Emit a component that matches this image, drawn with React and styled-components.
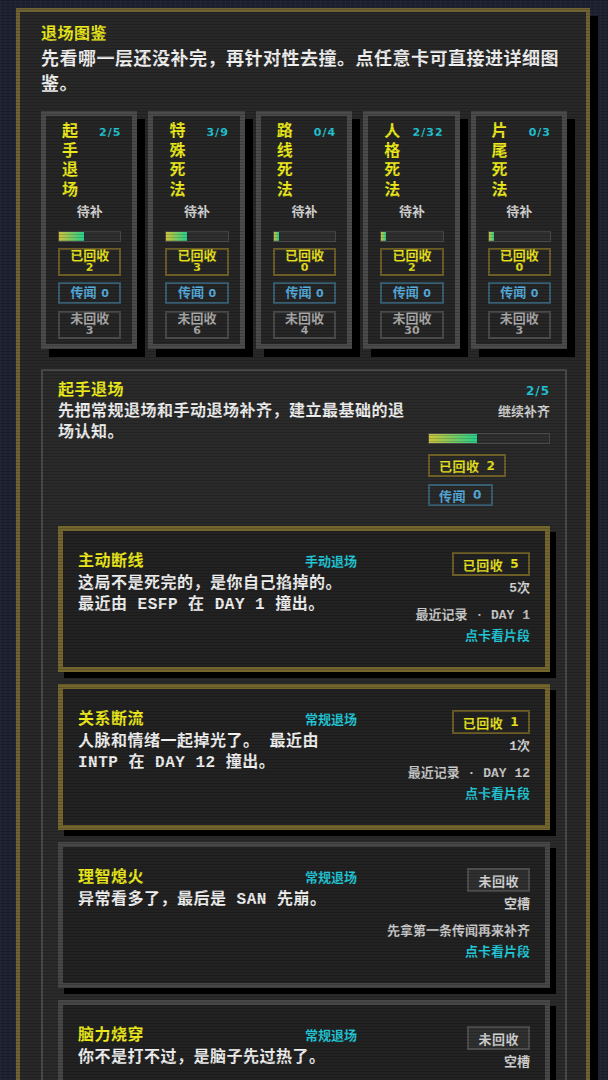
import React from "react";
import styled, { createGlobalStyle } from "styled-components";

const MONO = `"Liberation Mono", "Noto Sans CJK SC", monospace`;
const SANS = `"DejaVu Sans", "Noto Sans CJK SC", sans-serif`;

const YELLOW = "#ecea1c";
const CYAN = "#22c6d6";

const GlobalStyle = createGlobalStyle`
  html, body {
    margin: 0;
    padding: 0;
  }
  body {
    background-color: #1f2331;
    background-image: repeating-linear-gradient(
      90deg,
      rgba(255, 255, 255, 0.025) 0 1px,
      transparent 1px 5px
    );
    font-family: ${MONO};
    font-weight: 700;
    color: #eeeeee;
  }
`;

// crt scanlines over the whole screen
const Scanlines = styled.div`
  position: fixed;
  inset: 0;
  pointer-events: none;
  z-index: 10;
  background: repeating-linear-gradient(
    to bottom,
    rgba(0, 0, 0, 0.16) 0 1px,
    transparent 1px 3px
  );
`;

const Page = styled.div`
  padding: 8px 18px 40px 16px;
`;

const Panel = styled.section`
  background: #282828;
  border: 4px solid #6f6233;
  box-shadow: 8px 8px 0 #000;
  padding: 12px 19px 30px 21px;
`;

const PanelTitle = styled.h2`
  margin: 0;
  font-size: 16px;
  line-height: 22px;
  letter-spacing: 0.5px;
  color: ${YELLOW};
`;

const PanelLead = styled.p`
  margin: 2px 0 0;
  font-size: 18px;
  line-height: 25px;
  letter-spacing: 0.5px;
  color: #f0f0f0;
`;

const TallyRow = styled.div`
  margin-top: 13px;
  display: grid;
  grid-template-columns: repeat(5, minmax(0, 1fr));
  column-gap: 11px;
`;

const Tally = styled.div`
  background: #262626;
  border: 5px solid #4b4b4b;
  box-shadow: 8px 8px 0 #000;
  padding: 7px 11px 5px 12px;
  display: flex;
  flex-direction: column;
`;

const TallyHead = styled.div`
  display: flex;
  justify-content: space-between;
  align-items: flex-start;
`;

const TallyName = styled.div`
  width: 1em;
  margin-left: 4px;
  font-size: 16px;
  line-height: 19.5px;
  color: ${YELLOW};
  word-break: break-all;
`;

const Count = styled.span`
  font-family: ${SANS};
  font-size: ${(p) => p.$size || 11}px;
  line-height: ${(p) => p.$line || 19.5}px;
  letter-spacing: 1px;
  color: ${CYAN};
`;

const TallyState = styled.div`
  margin-top: 4px;
  text-align: center;
  font-size: 13px;
  line-height: 16px;
  color: #d4d4d4;
`;

const Bar = styled.div`
  margin-top: ${(p) => p.$gap || 10}px;
  height: 11px;
  box-sizing: border-box;
  border: 1px solid #4a4a4a;
  background: #2f2f2f;
`;

const BarFill = styled.div`
  height: 100%;
  background: linear-gradient(90deg, #cfc33a, #26d08c);
`;

const tone = {
  gold: { border: "#6d5d27", text: "#e6e01e", bg: "transparent" },
  blue: { border: "#385e72", text: "#55abdc", bg: "transparent" },
  gray: { border: "#4a4a4a", text: "#a8a8a8", bg: "transparent" },
  slot: { border: "#4d4d4d", text: "#d2d2d2", bg: "#303030" },
};

const StatBox = styled.div`
  margin-top: ${(p) => p.$gap}px;
  border: 2px solid ${(p) => tone[p.$tone].border};
  color: ${(p) => tone[p.$tone].text};
  font-family: ${SANS};
  text-align: center;
  display: flex;
  flex-direction: column;
  justify-content: center;
  min-height: ${(p) => p.$h}px;
  box-sizing: border-box;
`;

const StatLabel = styled.span`
  font-size: 13px;
  line-height: ${(p) => p.$line || 12}px;
`;

const StatNum = styled.span`
  font-size: 11px;
  line-height: 12px;
`;

const Chip = styled.span`
  display: inline-flex;
  align-items: center;
  gap: 7px;
  height: ${(p) => p.$h || 23}px;
  box-sizing: border-box;
  padding: 0 9px;
  border: 2px solid ${(p) => tone[p.$tone].border};
  background: ${(p) => tone[p.$tone].bg};
  color: ${(p) => tone[p.$tone].text};
  font-family: ${SANS};
  font-size: 13px;
  letter-spacing: 0.5px;
  white-space: nowrap;
`;

const ChipNum = styled.span`
  font-size: 12px;
`;

const Group = styled.section`
  margin-top: 20px;
  border: 2px solid #4a4a4a;
  background: #2a2a2a;
  padding: 10px 15px 20px;
`;

const GroupHead = styled.div`
  display: grid;
  grid-template-columns: minmax(0, 1fr) 122px;
  column-gap: 16px;
`;

const GroupTitle = styled.div`
  font-size: 16px;
  line-height: 21px;
  letter-spacing: 0.5px;
  color: ${YELLOW};
`;

const GroupDesc = styled.p`
  margin: 0;
  font-size: 16px;
  line-height: 21px;
  letter-spacing: 0.5px;
  color: #eeeeee;
`;

const GroupSide = styled.div`
  display: flex;
  flex-direction: column;
  align-items: stretch;
  text-align: right;
`;

const SideText = styled.div`
  font-size: 13px;
  line-height: ${(p) => p.$line || 18}px;
  margin-top: ${(p) => p.$gap || 0}px;
  color: ${(p) => p.$color || "#cfcfcf"};
  white-space: nowrap;
`;

const ChipSlot = styled.div`
  margin-top: ${(p) => p.$gap}px;
  display: flex;
  justify-content: flex-start;
`;

const EntryList = styled.div`
  margin-top: 20px;
  display: flex;
  flex-direction: column;
  gap: 12px;
`;

const Entry = styled.article`
  border: 5px solid ${(p) => (p.$got ? "#74662f" : "#474747")};
  background: #222222;
  box-shadow: 6px 6px 0 #000;
  padding: 21px 15px 21px;
  display: grid;
  grid-template-columns: minmax(0, 1fr) 157px;
  column-gap: 16px;
`;

const EntryHead = styled.div`
  display: flex;
  justify-content: space-between;
  align-items: center;
`;

const EntryName = styled.span`
  font-size: 16px;
  line-height: 21px;
  letter-spacing: 0.5px;
  color: ${YELLOW};
`;

const EntryTag = styled.span`
  font-size: 13px;
  line-height: 21px;
  color: ${CYAN};
`;

const EntryDesc = styled.p`
  margin: 1px 0 0;
  font-size: 16px;
  line-height: 21px;
  letter-spacing: 0.5px;
  color: #f0f0f0;
`;

const EntrySide = styled.div`
  display: flex;
  flex-direction: column;
  align-items: flex-end;
`;

const tallies = [
  { name: "起手退场", got: 2, total: 5, rumor: 0 },
  { name: "特殊死法", got: 3, total: 9, rumor: 0 },
  { name: "路线死法", got: 0, total: 4, rumor: 0 },
  { name: "人格死法", got: 2, total: 32, rumor: 0 },
  { name: "片尾死法", got: 0, total: 3, rumor: 0 },
];

const entries = [
  {
    name: "主动断线",
    tag: "手动退场",
    got: 5,
    desc: "这局不是死完的，是你自己掐掉的。 最近由 ESFP 在 DAY 1 撞出。",
    note: "最近记录 · DAY 1",
  },
  {
    name: "关系断流",
    tag: "常规退场",
    got: 1,
    desc: "人脉和情绪一起掉光了。 最近由 INTP 在 DAY 12 撞出。",
    note: "最近记录 · DAY 12",
  },
  {
    name: "理智熄火",
    tag: "常规退场",
    got: 0,
    desc: "异常看多了，最后是 SAN 先崩。",
    note: "先拿第一条传闻再来补齐",
  },
  {
    name: "脑力烧穿",
    tag: "常规退场",
    got: 0,
    desc: "你不是打不过，是脑子先过热了。",
    note: "先拿第一条传闻再来补齐",
  },
];

const fill = (got, total) => `max(5px, ${(got / total) * 100}%)`;

const TallyCard = ({ t }) => (
  <Tally>
    <TallyHead>
      <TallyName>{t.name}</TallyName>
      <Count>
        {t.got}/{t.total}
      </Count>
    </TallyHead>
    <TallyState>待补</TallyState>
    <Bar>
      <BarFill style={{ width: fill(t.got, t.total) }} />
    </Bar>
    <StatBox $tone="gold" $gap={6} $h={28}>
      <StatLabel>已回收</StatLabel>
      <StatNum>{t.got}</StatNum>
    </StatBox>
    <StatBox $tone="blue" $gap={6} $h={22}>
      <StatLabel $line={18}>
        传闻 <StatNum>{t.rumor}</StatNum>
      </StatLabel>
    </StatBox>
    <StatBox $tone="gray" $gap={7} $h={27}>
      <StatLabel>未回收</StatLabel>
      <StatNum>{t.total - t.got}</StatNum>
    </StatBox>
  </Tally>
);

const EntryCard = ({ e }) => (
  <Entry $got={e.got > 0}>
    <div>
      <EntryHead>
        <EntryName>{e.name}</EntryName>
        <EntryTag>{e.tag}</EntryTag>
      </EntryHead>
      <EntryDesc>{e.desc}</EntryDesc>
    </div>
    <EntrySide>
      {e.got > 0 ? (
        <Chip $tone="gold" $h={24}>
          已回收 <ChipNum>{e.got}</ChipNum>
        </Chip>
      ) : (
        <Chip $tone="slot" $h={24}>
          未回收
        </Chip>
      )}
      <SideText $gap={4} $color="#d2d2d2">
        {e.got > 0 ? `${e.got}次` : "空槽"}
      </SideText>
      <SideText $gap={9} $color="#c8c8c8">
        {e.note}
      </SideText>
      <SideText $gap={3} $color={CYAN}>
        点卡看片段
      </SideText>
    </EntrySide>
  </Entry>
);

export default function App() {
  const first = tallies[0];
  return (
    <>
      <GlobalStyle />
      <Page>
        <Panel>
          <PanelTitle>退场图鉴</PanelTitle>
          <PanelLead>
            先看哪一层还没补完，再针对性去撞。点任意卡可直接进详细图鉴。
          </PanelLead>

          <TallyRow>
            {tallies.map((t) => (
              <TallyCard key={t.name} t={t} />
            ))}
          </TallyRow>

          <Group>
            <GroupHead>
              <div>
                <GroupTitle>{first.name}</GroupTitle>
                <GroupDesc>
                  先把常规退场和手动退场补齐，建立最基础的退场认知。
                </GroupDesc>
              </div>
              <GroupSide>
                <Count $size={12} $line={21}>
                  {first.got}/{first.total}
                </Count>
                <SideText $line={21}>继续补齐</SideText>
                <Bar $gap={10}>
                  <BarFill style={{ width: fill(first.got, first.total) }} />
                </Bar>
                <ChipSlot $gap={10}>
                  <Chip $tone="gold">
                    已回收 <ChipNum>{first.got}</ChipNum>
                  </Chip>
                </ChipSlot>
                <ChipSlot $gap={7}>
                  <Chip $tone="blue" $h={22}>
                    传闻 <ChipNum>{first.rumor}</ChipNum>
                  </Chip>
                </ChipSlot>
              </GroupSide>
            </GroupHead>

            <EntryList>
              {entries.map((e) => (
                <EntryCard key={e.name} e={e} />
              ))}
            </EntryList>
          </Group>
        </Panel>
      </Page>
      <Scanlines />
    </>
  );
}
